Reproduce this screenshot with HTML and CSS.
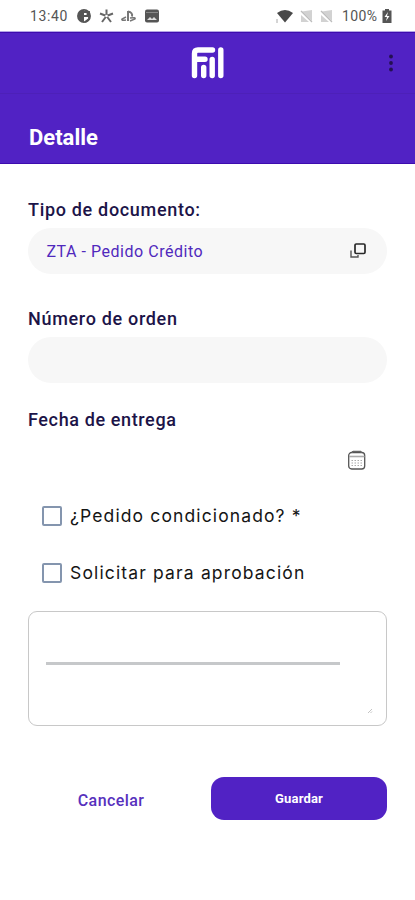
FILE: index.html
```html
<!DOCTYPE html>
<html lang="es">
<head>
<meta charset="utf-8">
<title>Detalle</title>
<link rel="stylesheet" href="styles.css">
</head>
<body>
<div class="status">
  <span class="clock">13:40</span>
  <svg class="status-left" width="86" height="18" viewBox="0 0 86 18">
    <circle cx="8" cy="9" r="6.100" fill="#fff" stroke="#555" stroke-width="1.700"/>
    <path d="M8 3v12a6 6 0 0 1 0-12z" fill="#555"/>
    <path d="M8 5h3.500v4H8M13 4v8l-4 3" fill="none" stroke="#555" stroke-width="1.800"/>
    <path d="M30.500 9V2.500M30.500 9l-6.500-2.500M30.500 9l6.500-2.500M30.500 9l-4.500 6M30.500 9l4.500 6" stroke="#666" stroke-width="2"/>
    <circle cx="30.500" cy="9" r="1.300" fill="#fff"/>
    <path d="M52 4v10M52 4.500q5 1 4 5" fill="none" stroke="#777" stroke-width="2"/>
    <path d="M50 10l-4 2q-1 2 4 1M54 11q6-1 5 1l-5 2" fill="none" stroke="#777" stroke-width="1.500"/>
    <rect x="69" y="2.500" width="14" height="13" rx="2" fill="#555"/>
    <path d="M70 5.500h12" stroke="#888"/>
    <path d="M71 13l3-3 2 2 2-2 3 3z" fill="#ddd"/>
  </svg>
  <svg class="status-right" width="60" height="18" viewBox="0 0 60 18">
    <path d="M1 6q8-6 16 0l-8 9.500z" fill="#484848"/>
    <path d="M1 12v4" stroke="#aaa"/>
    <path d="M26 4.500 36 3v11zM25 8v7h8zM46 4.500 56 3v11zM45 8v7h8z" fill="#d2d2d2"/>
    <path d="M25 4l11 11M45 4l11 11" stroke="#bdbdbd" stroke-width="1.300"/>
  </svg>
  <span class="percent">100%</span>
  <svg width="10" height="16" viewBox="0 0 10 16">
    <path d="M3 1h4v1.500h2.500V15H.5V2.500H3z" fill="#555"/>
    <path d="M6 4 2.500 9H5l-1 4 3.500-5H5z" fill="#fff"/>
  </svg>
</div>
<header class="appbar">
  <svg class="logo" width="36" height="34" viewBox="0 0 36 34">
    <path d="M4.500 29.500V7.500q0-3.500 3.500-3.500H22.500M5 13.200h10M13.700 21.500v8M22.200 13.500v16M30.800 4v25.500" fill="none" stroke="#fff" stroke-width="5.400" stroke-linecap="round"/>
  </svg>
  <svg class="more" width="6" height="20" viewBox="0 0 6 20">
    <g fill="#241052"><circle cx="3" cy="3.500" r="1.900"/><circle cx="3" cy="10" r="1.900"/><circle cx="3" cy="16.500" r="1.900"/></g>
  </svg>
</header>
<div class="heading"><h1>Detalle</h1></div>
<main class="form">
  <div class="group">
    <label class="type-label">Tipo de documento:</label>
    <div class="field">
      <span>ZTA - Pedido Crédito</span>
      <svg width="18" height="18" viewBox="0 0 18 18" fill="none">
        <rect x="6" y="2" width="10" height="9.500" rx="1.200" stroke="#292929" stroke-width="1.700"/>
        <path d="M2 8.500V15h7v-2" stroke="#555" stroke-width="1.400"/>
      </svg>
    </div>
  </div>
  <div class="group">
    <label class="order-label">Número de orden</label>
    <div class="field"></div>
  </div>
  <div class="group date">
    <label class="date-label">Fecha de entrega</label>
    <svg class="calendar" width="20" height="20" viewBox="0 0 20 20" fill="none">
      <rect x="1.700" y="2.500" width="16" height="16.500" rx="3" stroke="#555" stroke-width="1.300"/>
      <path d="M5.500 1v2M14 1v2M6 1.300h8" stroke="#666" stroke-width="1.200"/>
      <path d="M2 6.500h15.500" stroke="#aaa" stroke-width="1.600"/>
      <path d="M4.500 10.500h11M4.500 13h11M4.500 15.500h11" stroke="#aaa" stroke-width="1" stroke-dasharray="1.500 1.500"/>
    </svg>
  </div>
  <div class="checks">
    <label class="check"><i class="box"></i><span class="conditioned">¿Pedido condicionado? *</span></label>
    <label class="check"><i class="box"></i><span class="approval">Solicitar para aprobación</span></label>
  </div>
  <div class="notes">
    <div class="line"></div>
    <svg class="grip" width="6" height="6" viewBox="0 0 6 6"><path d="M1 5l4-4M3.500 5 5 3.500" stroke="#c4c4c4"/></svg>
  </div>
  <div class="actions">
    <button class="cancel">Cancelar</button>
    <button class="save">Guardar</button>
  </div>
</main>
</body>
</html>
```
FILE: styles.css
```css
* { box-sizing: border-box; }
body {
  margin: 0;
  min-height: 900px;
  background: #fff;
  font-family: Roboto, sans-serif;
}
.status {
  display: flex;
  align-items: center;
  height: 32px;
  padding: 0 23px 0 30px;
  border-bottom: 1px solid #b4a6e6;
  color: #555;
  font-size: 14px;
}
.clock { width: 46px; letter-spacing: 0.6px; }
.status-right { margin-left: auto; margin-right: 6px; }
.percent { width: 40px; letter-spacing: 0.4px; }
.appbar {
  display: flex;
  align-items: center;
  justify-content: space-between;
  height: 62px;
  padding: 0 21px 0 190px;
  background: #5122c4;
  border-top: 1px solid #3d0bae;
  border-bottom: 1px solid #4d20b8;
}
.heading {
  height: 70px;
  padding: 30px 29px 0;
  background: #5122c4;
  border-bottom: 1px solid #3d0bae;
}
h1 {
  margin: 0;
  color: #fff;
  font-size: 22px;
  line-height: 27px;
  font-weight: 700;
}
.form { padding: 35px 28px 0; }
.group { height: 109px; }
.group > label {
  display: block;
  height: 29px;
  color: #1c1448;
  font-size: 18px;
  line-height: 21px;
  font-weight: 500;
  letter-spacing: 0.68px;
  white-space: nowrap;
}
.group > .date-label { letter-spacing: 0.62px; line-height: 20px; }
.field {
  display: flex;
  align-items: center;
  justify-content: space-between;
  height: 46px;
  padding: 0 20px 0 18.5px;
  border-radius: 23px;
  background: #f7f7f7;
  color: #5029bd;
  font-size: 16px;
  letter-spacing: 0.53px;
}
.group.date { height: 77px; margin-top: -7px; }
.calendar { display: block; margin: 11px 20px 0 auto; }
.checks { padding-left: 14px; }
.check {
  display: flex;
  align-items: center;
  gap: 8px;
  height: 57px;
  color: #151515;
  font-family: Inter, sans-serif;
  font-size: 17.5px;
  white-space: nowrap;
}
.box {
  width: 20px;
  height: 20px;
  border: 2px solid #8495ae;
  border-radius: 2px;
}
.conditioned { letter-spacing: 1.12px; }
.approval { letter-spacing: 1.15px; }
.notes {
  display: flex;
  flex-direction: column;
  height: 115px;
  margin-top: 10px;
  padding: 50px 13px 11px 17px;
  border: 1px solid #c8c8c8;
  border-radius: 9px;
}
.line { width: 294px; height: 3px; background: #c6c8ca; }
.grip { margin-top: auto; align-self: flex-end; }
.actions { display: flex; justify-content: space-between; padding-top: 51px; }
button {
  border: 0;
  padding: 0;
  background: none;
  font-family: Roboto, sans-serif;
}
.cancel {
  width: 166px;
  padding-top: 3px;
  color: #5731bd;
  font-size: 16px;
  font-weight: 500;
  letter-spacing: 0.4px;
}
.save {
  width: 176px;
  height: 43px;
  border-radius: 13px;
  background: #5122c4;
  color: #fff;
  font-size: 13px;
  font-weight: 700;
  letter-spacing: 0.15px;
}
```
